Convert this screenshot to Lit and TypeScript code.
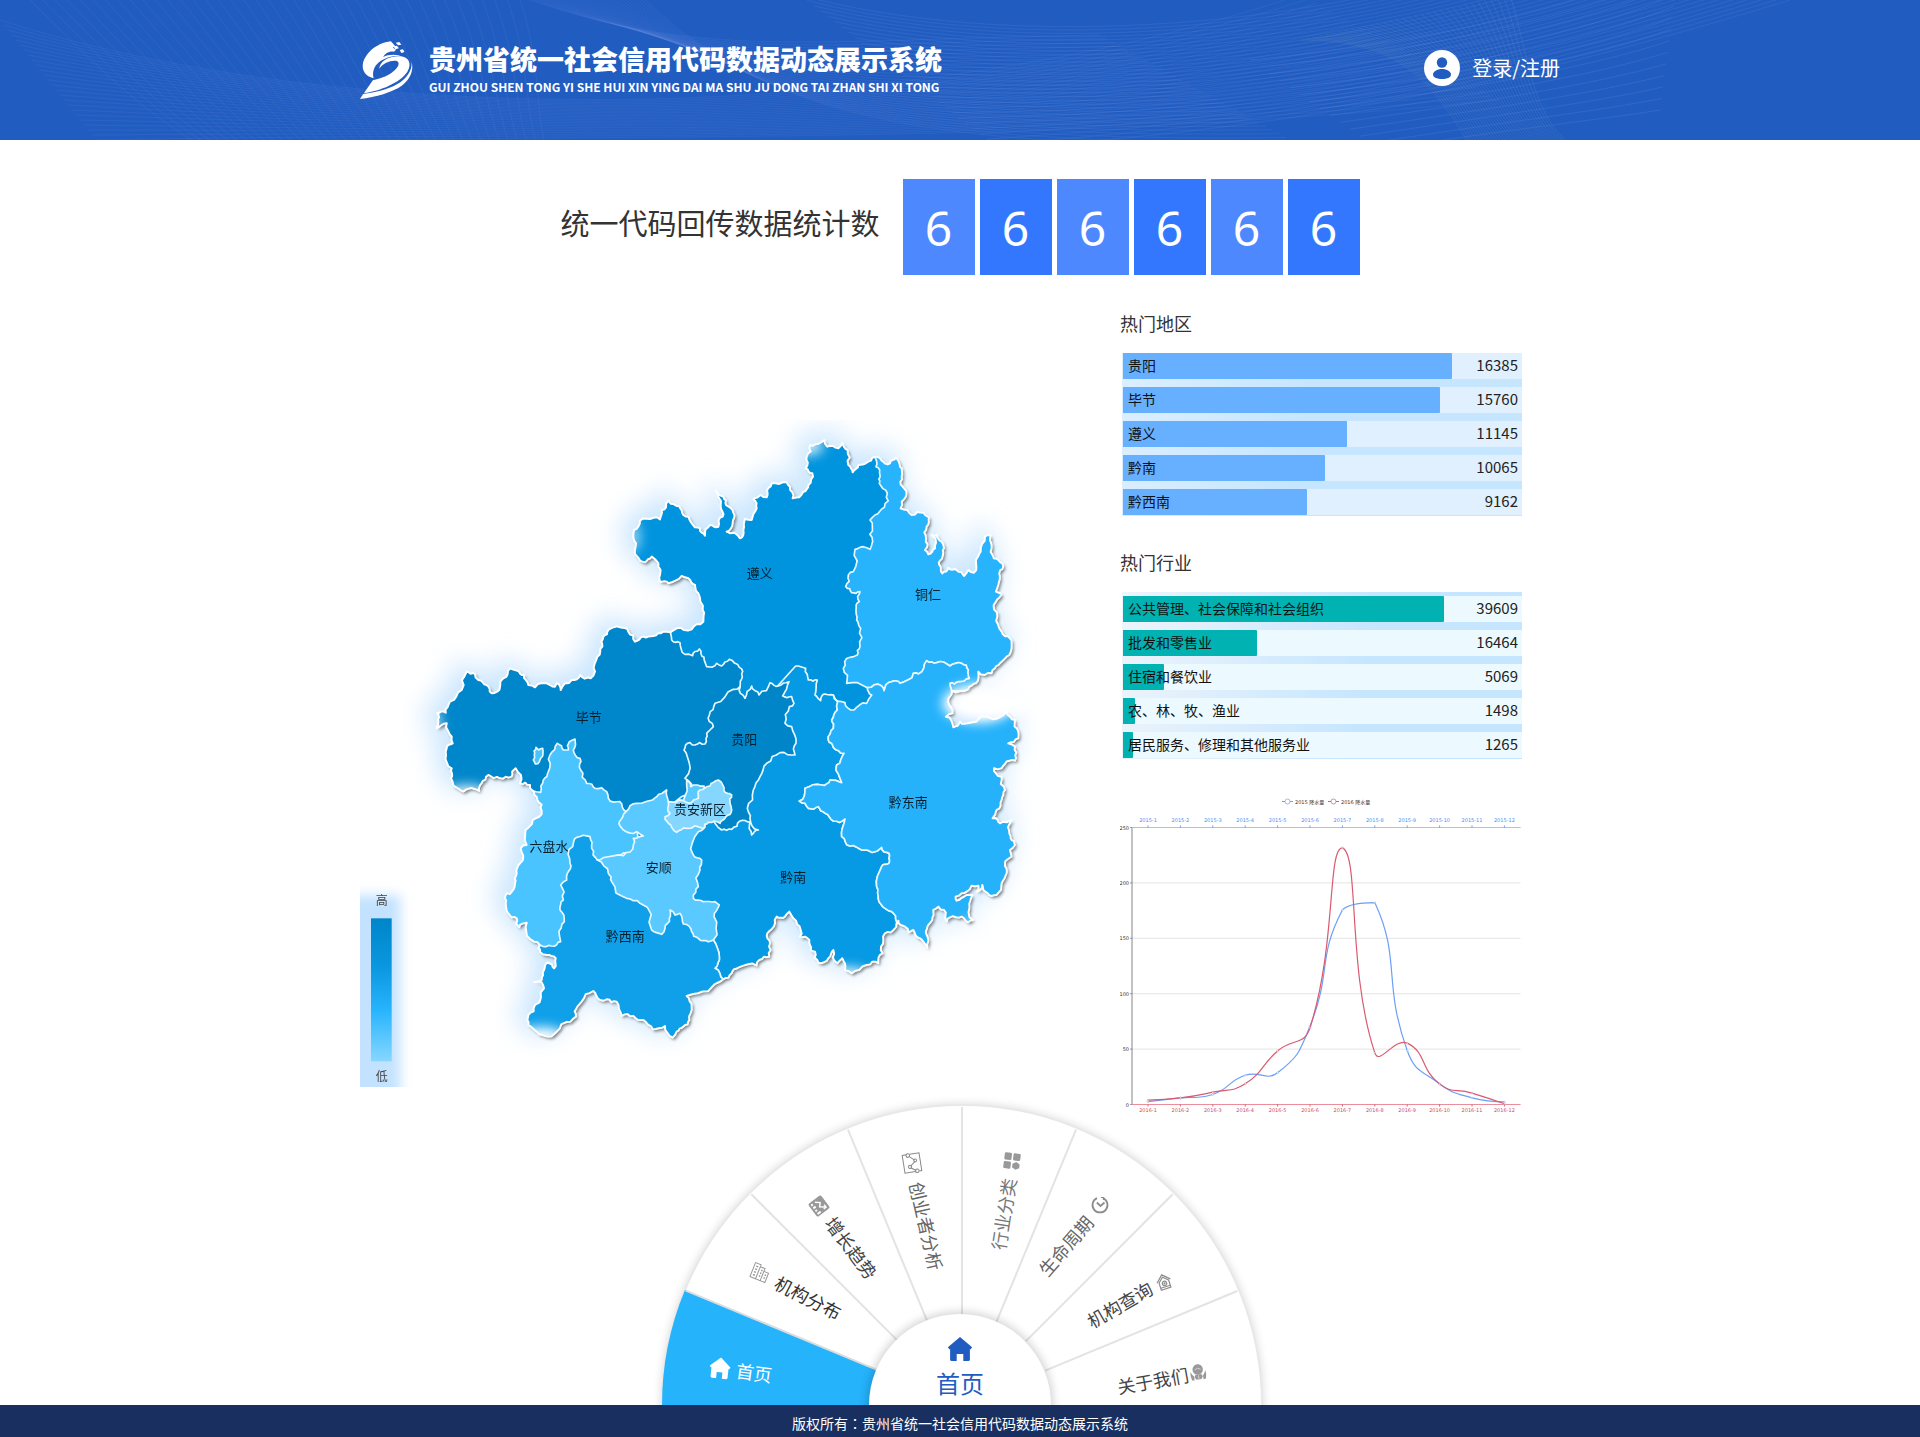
import { LitElement, html, svg, css } from "lit";
import { customElement, property } from "lit/decorators.js";

type Pt = [number, number];

/* ---------- geometry helpers ---------- */

const pts = (s: string): Pt[] =>
  s.trim().split(/\s+/).map((p) => p.split(",").map(Number) as Pt);

/* Roughens a segment the same way whichever direction it is walked in. */
function rough(a: Pt, b: Pt, depth: number): Pt[] {
  const dx = b[0] - a[0];
  const dy = b[1] - a[1];
  const len = Math.hypot(dx, dy);
  if (depth === 0 || len < 12 || len > 130) return [b];
  const h = Math.sin((a[0] + b[0]) * 12.9898 + (a[1] + b[1]) * 78.233) * 43758.5453;
  const flip = a[0] * 3000 + a[1] < b[0] * 3000 + b[1] ? 1 : -1;
  const k = (h - Math.floor(h) - 0.5) * 0.42 * flip;
  const m: Pt = [(a[0] + b[0]) / 2 - dy * k, (a[1] + b[1]) / 2 + dx * k];
  return [...rough(a, m, depth - 1), ...rough(m, b, depth - 1)];
}

function coast(s: string): string {
  const p = pts(s);
  const out: Pt[] = [p[0]];
  p.forEach((a, i) => out.push(...rough(a, p[(i + 1) % p.length], 2)));
  return "M" + out.map((q) => `${q[0].toFixed(1)} ${q[1].toFixed(1)}`).join("L") + "Z";
}

/* ---------- province map ---------- */

const OUTLINE = coast(`850,352 852,330 865,320 870,302 890,296 930,298 935,270 948,262 955,242 975,255 995,270 1000,285 1015,290 1025,310 1050,325
1065,347 1080,315 1105,320 1118,290 1112,260 1105,230 1098,212 1120,230 1128,255 1150,278 1148,310 1130,335 1170,355 1180,330 1185,297 1205,300 1220,265
1210,238 1232,225 1250,232 1255,205 1265,190 1310,187 1320,200 1328,235 1360,215 1375,195 1387,160 1367,145 1370,110 1380,75 1405,72 1423,60 1432,80
1465,85 1477,68 1493,90 1495,135 1508,157 1525,135 1550,128 1572,110 1595,122 1620,130 1637,113 1650,140 1655,170 1658,200 1668,230 1652,265 1685,285
1720,278 1737,292 1730,320 1728,355 1725,390 1735,403 1755,385 1758,368 1745,345 1762,345 1775,365 1782,385 1778,410 1768,435 1777,460 1795,443 1820,450
1842,468 1855,450 1872,458 1878,420 1892,395 1905,350 1922,347 1925,375 1932,415 1957,430 1948,460 1945,495 1938,515 1955,522 1938,545 1942,590 1955,635
1980,655 1985,685 1978,705 1955,725 1935,745 1925,760 1885,755 1878,790 1855,808 1805,812 1795,845 1808,880 1788,890 1810,922 1830,905 1860,908 1930,898
1970,876 1980,890 1995,900 2005,935 2005,955 1975,970 1995,980 1998,1015 1995,1022 1965,1032 1955,1045 1932,1045 1938,1060 1955,1070 1965,1110 1955,1140
1940,1170 1928,1195 1950,1210 1970,1207 1985,1200 1977,1230 1982,1255 1995,1275 1980,1290 1985,1310 1965,1332 1970,1360 1955,1390 1940,1425 1925,1428
1900,1410 1897,1395 1880,1415 1885,1397 1865,1397 1850,1415 1835,1420 1817,1430 1820,1442 1850,1425 1867,1425 1858,1450 1870,1500 1855,1507 1835,1490
1800,1492 1790,1505 1782,1470 1765,1460 1750,1470 1747,1500 1735,1515 1728,1540 1732,1585 1720,1565 1710,1555 1690,1530 1675,1537 1665,1520 1645,1502
1635,1525 1605,1540 1600,1560 1598,1600 1585,1630 1550,1635 1505,1660 1485,1650 1477,1615 1462,1630 1450,1590 1435,1615 1405,1628 1395,1595 1382,1590
1378,1560 1365,1550 1350,1550 1352,1530 1330,1495 1318,1475 1305,1490 1280,1490 1275,1510 1252,1540 1260,1570 1258,1610 1228,1620 1220,1637 1165,1643
1145,1660 1120,1678 1085,1702 1030,1722 1010,1728 1025,1760 1018,1800 1000,1820 980,1835 968,1853 945,1818 908,1828 880,1800 850,1788 815,1788 800,1745
770,1738 750,1740 730,1713 695,1745 682,1760 678,1790 640,1810 625,1830 595,1850 560,1835 535,1815 535,1785 555,1755 582,1705 575,1687 553,1686 575,1680
582,1650 593,1628 612,1645 617,1615 590,1605 570,1595 567,1572 540,1557 530,1508 508,1522 500,1495 475,1480 467,1450 470,1420 480,1422 495,1390 500,1360
510,1330 512,1285 530,1275 538,1220 548,1200 575,1172 562,1140 545,1110 540,1095 510,1090 497,1045 485,1070 450,1075 415,1065 395,1090 388,1113 340,1115
315,1100 303,1075 305,1045 288,1005 290,985 308,970 305,950 290,910 260,925 265,905 262,880 287,878 300,845 335,810 350,755 375,762 385,780 410,795
425,820 450,800 460,775 480,745 500,752 522,765 535,795 555,802 600,795 615,800 620,790 632,810 665,780 690,765 722,775 735,755 742,710 757,680 760,650
775,630 810,622 835,635 855,665 880,650 910,648 940,635 960,637 980,625 1025,628 1060,605 1058,570 1045,520 1035,495 1015,475 995,468 955,490 930,485
925,440 905,410 885,427 862,410 858,370`);

const ZUNYI_TONGREN = `1572,110 1578,140 1590,165 1588,190 1612,220 1603,262 1575,285 1560,300 1567,320 1568,365 1560,388 1540,380 1515,388 1510,455 1495,465
1487,500 1505,518 1530,515 1528,545 1518,570 1520,600 1532,625 1530,680 1522,705 1500,712 1480,745 1490,790`;
const TONGREN_QDN = `1552,803 1595,798 1602,812 1625,785 1650,790 1690,760 1705,762 1730,722 1760,728 1800,738 1835,730 1855,750 1858,775 1825,785 1800,790 1805,812`;
const QIANNAN_QDN = `1450,825 1462,870 1445,900 1450,925 1435,960 1450,982 1482,1000 1460,1035 1475,1088 1440,1080 1415,1095 1365,1105 1348,1143 1375,1165
1405,1160 1425,1180 1450,1203 1485,1197 1475,1250 1500,1278 1535,1290 1595,1282 1617,1300 1617,1330 1595,1340 1580,1400 1585,1438 1605,1465 1625,1475 1640,1505`;
const back = (s: string) => s.trim().split(/\s+/).reverse().join(" ");

const REGIONS: { fill: string; d: string }[] = [
  { fill: "#0087cb", d: coast(`962,560 962,640 965,660 990,668 1005,703 1028,707 1048,687 1062,712 1070,740 1100,730 1115,738 1138,718 1168,742 1177,770 1170,800
    1120,1000 1050,1120 940,1150 828,1200 700,1150 620,1150 500,1130 400,1200 200,1200 200,560`) },
  { fill: "#069ae4", d: coast(`1337,738 1367,745 1375,780 1402,780 1395,825 1412,842 1425,822 ${QIANNAN_QDN} 1640,1800 1120,1800 1120,1678 1095,1645 1108,1610
    1090,1560 1000,1400 1000,1200 1100,1000`) },
  { fill: "#27b4fd", d: coast(`${ZUNYI_TONGREN} ${TONGREN_QDN} 1850,830 2100,800 2100,50 1572,50`) },
  { fill: "#25b2fb", d: coast(`${TONGREN_QDN} 2100,815 2100,1800 1640,1660 ${back(QIANNAN_QDN)} 1485,848 1512,870 1550,850 1565,825`) },
  { fill: "#10a0e9", d: coast(`690,1150 780,1270 900,1300 1000,1400 1090,1560 1108,1610 1095,1645 1120,1678 1100,1900 450,1900 400,1500 600,1540 610,1260`) },
  { fill: "#49c4ff", d: coast(`572,1117 580,1080 595,1055 600,1005 622,970 640,990 655,990 658,965 675,957 670,990 690,1015 692,1050 710,1090 735,1105 770,1115
    775,1135 810,1145 828,1175 860,1220 850,1300 742,1320 725,1285 720,1250 680,1252 668,1280 660,1330 652,1360 650,1380 632,1395 640,1440 630,1470 643,1505
    628,1545 632,1565 605,1578 570,1575 400,1575 400,1120 545,1110`) },
  { fill: "#49c4ff", d: coast(`558,982 566,990 578,985 578,1008 568,1025 556,1032 550,1020 553,1005`) },
  { fill: "#0085c8", d: coast(`1170,800 1185,835 1205,798 1227,825 1260,788 1285,798 1317,785 1298,828 1325,830 1332,850 1318,860 1305,910 1325,920 1338,970
    1335,1005 1290,998 1250,1030 1230,1070 1210,1110 1192,1165 1200,1195 1225,1230 1205,1245 1200,1205 1170,1203 1145,1228 1115,1230 1080,1190 1030,1120
    1005,1075 1012,1010 1002,990 1020,968 1035,975 1065,972 1070,940 1090,920 1078,885 1095,850 1150,808`) },
  { fill: "#5ac9ff", d: coast(`828,1175 860,1150 920,1130 950,1110 955,1145 1000,1142 1010,1080 1022,1100 1062,1098 1070,1200 1045,1235 1030,1305 1055,1320
    1050,1350 1045,1400 1030,1435 1060,1445 1095,1445 1108,1455 1092,1490 1090,1560 1060,1562 1045,1555 1025,1535 1000,1512 990,1480 975,1485 960,1470
    958,1495 945,1525 935,1543 905,1530 870,1450 830,1435 785,1385 775,1360 742,1320 760,1313 820,1307 850,1275 850,1255 880,1248 860,1235 818,1228 808,1205`) },
  { fill: "#86d7ff", d: coast(`955,1145 1000,1142 1020,1150 1045,1135 1050,1110 1080,1098 1105,1080 1118,1095 1122,1112 1145,1125 1140,1150 1145,1170 1128,1190
    1110,1210 1075,1207 1060,1225 1010,1225 980,1237 962,1215 945,1190 960,1180`) },
];

const PLACES: [string, number, number][] = [
  ["遵义", 1229, 457], ["铜仁", 1734, 521], ["毕节", 716, 890], ["贵阳", 1183, 956],
  ["贵安新区", 1050, 1167], ["黔东南", 1675, 1146], ["六盘水", 597, 1276],
  ["安顺", 926, 1341], ["黔南", 1330, 1371], ["黔西南", 826, 1546],
];

@customElement("province-map")
class ProvinceMap extends LitElement {
  static styles = css`
    :host { display: block; }
    svg { display: block; width: 100%; height: auto; }
    .place { font-size: 39px; fill: #06202e; }
    .scale { font-size: 36px; fill: #444; }
    text { text-anchor: middle; dominant-baseline: central; }
  `;
  render() {
    return html`<svg viewBox="30 0 2040 2000" role="img" aria-label="贵州省地图">
      <defs>
        <clipPath id="land"><path d=${OUTLINE} /></clipPath>
        <clipPath id="corner"><rect x="30" y="1340" width="200" height="660" /></clipPath>
        <filter id="glow" x="-20%" y="-20%" width="140%" height="140%"><feGaussianBlur stdDeviation="40" /></filter>
        <filter id="shade" x="-10%" y="-10%" width="120%" height="120%"><feGaussianBlur stdDeviation="5" /></filter>
        <filter id="fade" x="-80%" y="-80%" width="260%" height="260%"><feGaussianBlur stdDeviation="18" /></filter>
        <linearGradient id="ramp" x1="0" y1="0" x2="0" y2="1">
          <stop offset="0" stop-color="#0085c8" /><stop offset="0.35" stop-color="#0a98e0" />
          <stop offset="0.65" stop-color="#29b5fd" /><stop offset="1" stop-color="#86d7ff" />
        </linearGradient>
      </defs>
      <path d=${OUTLINE} fill="#b5dcfd" stroke="#b5dcfd" stroke-width="30" opacity="0.7" filter="url(#glow)" transform="translate(-20 -16)" />
      <ellipse cx="1925" cy="850" rx="120" ry="42" fill="#fff" filter="url(#fade)" />
      <path d=${OUTLINE} fill="#333" opacity="0.6" filter="url(#shade)" transform="translate(6 7)" />
      <path d=${OUTLINE} fill="#0094de" />
      <g clip-path="url(#land)">
        ${REGIONS.map((r) => svg`<path d=${r.d} fill=${r.fill} stroke="#eaf8ff" stroke-width="5" stroke-linejoin="round" />`)}
        <g fill="#fff" filter="url(#fade)">
          <ellipse cx="1375" cy="80" rx="45" ry="26" opacity="0.8" />
          <ellipse cx="850" cy="350" rx="20" ry="46" opacity="0.6" />
          <ellipse cx="575" cy="1850" rx="70" ry="28" />
          <ellipse cx="1500" cy="1662" rx="50" ry="18" />
          <ellipse cx="350" cy="1120" rx="60" ry="24" opacity="0.9" />
          <ellipse cx="1885" cy="850" rx="108" ry="58" />
          <ellipse cx="255" cy="915" rx="16" ry="50" opacity="0.8" />
          <ellipse cx="1866" cy="1512" rx="22" ry="14" opacity="0.8" />
        </g>
      </g>
      <path d=${OUTLINE} fill="none" stroke="#fff" stroke-width="6" stroke-linejoin="round" />
      <ellipse cx="1895" cy="852" rx="85" ry="30" fill="#fff" filter="url(#fade)" />
      ${PLACES.map(([n, x, y]) => svg`<text class="place" x=${x} y=${y}>${n}</text>`)}
      <g clip-path="url(#corner)">
        <rect x="-60" y="1425" width="210" height="700" fill="#c2e2ff" filter="url(#fade)" />
      </g>
      <rect x="63" y="1495" width="62" height="429" fill="url(#ramp)" />
      <text class="scale" x="95" y="1440">高</text>
      <text class="scale" x="95" y="1966">低</text>
    </svg>`;
  }
}

/* ---------- ranked bars ---------- */

interface Rank { name: string; value: number }

@customElement("rank-list")
class RankList extends LitElement {
  static styles = css`
    :host { display: block; --bar: #66b0ff; --row: #e0f0ff; }
    :host([tone="teal"]) { --bar: #00b2b2; --row: #ecf9ff; }
    h2 { margin: 0 0 20px; font-size: 18px; line-height: 20px; font-weight: 400; color: #333; }
    ul { margin: 0 0 0 2px; padding: 0 0 1px 1px; list-style: none; display: grid; gap: 8px;
      background: linear-gradient(100deg, #dcefff 0%, #c6e6ff 45%); }
    :host([tone="teal"]) ul { padding-top: 4px; background: linear-gradient(100deg, #eef4fa 0%, #c6e6ff 60%); }
    li { display: grid; grid-template-columns: 1fr auto; align-items: start; height: 26px;
      background: var(--row); font-size: 14px; line-height: 24px; color: #111; padding-right: 4px; position: relative; }
    .bar { position: absolute; inset: 0 auto 0 0; background: var(--bar); border-radius: 0 1px 1px 0; }
    .name { position: relative; padding-left: 5px; }
    .value { position: relative; font-size: 15px; color: #222; }
  `;
  @property() heading = "";
  @property({ type: Number }) span = 82;
  @property({ attribute: false }) rows: Rank[] = [];
  render() {
    const max = Math.max(...this.rows.map((r) => r.value));
    return html`<h2>${this.heading}</h2>
      <ul>
        ${this.rows.map((r) => html`<li>
          <div class="bar" style="width:${((r.value / max) * this.span).toFixed(2)}%"></div>
          <span class="name">${r.name}</span><span class="value">${r.value}</span>
        </li>`)}
      </ul>`;
  }
}

/* ---------- rainfall chart ---------- */

const RAIN_2015 = [2.6, 5.9, 9, 26.4, 28.7, 70.7, 175.6, 182.2, 48.7, 18.8, 6, 2.3];
const RAIN_2016 = [3.9, 5.9, 11.1, 18.7, 48.3, 69.2, 231.6, 46.6, 55.4, 18.4, 10.3, 0.7];

@customElement("rain-chart")
class RainChart extends LitElement {
  static styles = css`
    :host { display: block; }
    svg { display: block; width: 100%; height: auto; font-family: "DejaVu Sans", "Noto Sans CJK SC", sans-serif; font-size: 5px; }
    text { dominant-baseline: central; fill: #333; }
    .mid { text-anchor: middle; }
    .end { text-anchor: end; }
    .blue { fill: #4d8df5; }
    .red { fill: #d14a61; }
  `;
  private at(data: number[]): Pt[] {
    return data.map((v, i) => [28 + 32.4 * i, 314.5 - v * 1.108]);
  }
  private curve(data: number[]) {
    const p = this.at(data);
    const ys = p.map((q) => q[1]);
    const lo = Math.min(...ys);
    const hi = Math.max(...ys);
    const clamp = (q: Pt): Pt => [q[0], Math.min(hi, Math.max(lo, q[1]))];
    let c0 = p[0];
    let d = `M${p[0]}`;
    for (let i = 1; i < p.length; i++) {
      let c1 = p[i];
      let next = p[i];
      if (i < p.length - 1) {
        const [a, b, c] = [p[i - 1], p[i], p[i + 1]];
        const before = Math.hypot(b[0] - a[0], b[1] - a[1]);
        const after = Math.hypot(c[0] - b[0], c[1] - b[1]);
        const k = after / (after + before);
        const v: Pt = [(c[0] - a[0]) * 0.5, (c[1] - a[1]) * 0.5];
        c1 = clamp([b[0] - v[0] * (1 - k), b[1] - v[1] * (1 - k)]);
        next = clamp([b[0] + v[0] * k, b[1] + v[1] * k]);
      }
      d += `C${c0} ${c1} ${p[i]}`;
      c0 = next;
    }
    return d;
  }
  private legend(x: number, name: string, color: string) {
    return svg`<path d="M${x} 11.5h11" stroke=${color} /><circle cx=${x + 5.5} cy="11.5" r="2.5" fill="#fff" stroke=${color} stroke-width="0.7" />
      <text x=${x + 13} y="11.5">${name}</text>`;
  }
  render() {
    const months = RAIN_2015.map((_, i) => i + 1);
    const blue = "#6a9ff8";
    const red = "#da5a70";
    return html`<svg viewBox="0 0 402 325" role="img" aria-label="降水量">
      ${this.legend(162, "2015 降水量", blue)}${this.legend(208, "2016 降水量", red)}
      ${[0, 50, 100, 150, 200, 250].map((v) => {
        const y = 314.5 - v * 1.108;
        return svg`<path d="M12 ${y}H400.5" stroke="#e4e4e4" />
          <path d="M10 ${y}h2" stroke="#777" stroke-width="0.7" /><text class="end" x="9" y=${y}>${v}</text>`;
      })}
      <path d="M12 37.5V314.5" stroke="#666" stroke-width="0.8" />
      <path d="M12 37.5H400.5" stroke="#a0c4ff" />
      <path d="M12 314.5H400.5" stroke="#eb8d9b" />
      ${months.map((m, i) => svg`<path d="M${28 + 32.4 * i} 35.5v2" stroke=${blue} /><path d="M${28 + 32.4 * i} 314.5v2" stroke=${red} />
        <text class="mid blue" x=${28 + 32.4 * i} y="30">2015-${m}</text>
        <text class="mid red" x=${28 + 32.4 * i} y="320">2016-${m}</text>`)}
      ${([[RAIN_2015, blue], [RAIN_2016, red]] as [number[], string][]).map(([data, color]) => svg`
        <path d=${this.curve(data)} fill="none" stroke=${color} stroke-width="1.2" />
        ${this.at(data).map((q) => svg`<circle cx=${q[0]} cy=${q[1]} r="0.9" fill="#fff" stroke=${color} stroke-width="0.4" />`)}`)}
    </svg>`;
  }
}

/* ---------- wheel menu ---------- */

const HOME = "M0 -11L11 -1.5L9.5 0.5L9 0V9.5Q9 11 7.5 11H3V4.5H-3V11H-7.5Q-9 11 -9 9.5V0L-9.5 0.5L-11 -1.5Z";

const ICONS = {
  home: svg`<path d=${HOME} fill="#fff" transform="scale(0.95)" />`,
  buildings: svg`<g fill="none" stroke="#999" stroke-width="1"><path d="M-8 7V-8H-2V7ZM-2 7V-6H3V7M3 7V-3H8V7H-8" />
    <path d="M-6 -5H-4M-6 -2H-4M-6 1H-4M-6 4H-4M0 -3H1.500M0 0H1.500M0 3H1.500M5 0H6.500M5 3H6.500" stroke-width="1.500" /></g>`,
  growth: svg`<rect x="-8" y="-8" width="16" height="16" rx="2" fill="#999" />
    <g fill="none" stroke="#fff" stroke-width="1.4"><path d="M-5.500 1L-2 -3L1 0L5 -5M2 -5H5.200V-2" /><path d="M-5 6V4M-1.500 6V3M2 6V4M5.500 6V2" stroke-width="2" /></g>`,
  network: svg`<g fill="none" stroke="#888" stroke-width="1"><path d="M-4 -9H-8.500V9H2M-1 -9H8.500V9H6M-2 -7L3 -2.500M3 -1L-2 3M-2 4.500L3 8" />
    <circle cx="-3" cy="-8" r="1.800" /><circle cx="3.500" cy="-2" r="1.400" /><circle cx="-2.500" cy="3.500" r="1.600" /><circle cx="4" cy="8.500" r="1.800" /></g>`,
  blocks: svg`<g fill="#999"><rect x="-8" y="-8" width="7.200" height="7.200" rx="1.200" /><rect x="0.800" y="-8" width="7.200" height="7.200" rx="1.200" />
    <rect x="-8" y="0.800" width="7.200" height="7.200" rx="1.200" /><path d="M4.400 0.500L8 2.600V6.200L4.400 8.300L0.800 6.200V2.600Z" /></g>`,
  clock: svg`<g fill="none" stroke="#8c8c8c" stroke-width="1.800"><path d="M-3 -6.900A7.500 7.500 0 1 0 3 -6.900" /><path d="M-3.200 -2.500L0.500 1L4.500 -2.500" /><path d="M1 -7.500H3.500V-5" stroke-width="1.200" /></g>`,
  search: svg`<g fill="none" stroke="#8c8c8c" stroke-width="1.200"><path d="M-7 -1L0 -7.500L7 -1" /><path d="M-5 7V-0.500L0 -5L5 -0.500V7Z" />
    <circle cx="0" cy="1.500" r="2.200" /><circle cx="0" cy="1.500" r="0.500" /><path d="M-5 5H5" /></g>`,
  people: svg`<g fill="#999"><circle cx="0" cy="-2.500" r="5.200" /><path d="M-3 2.500H3L4.200 5L2.500 7.500H-2.500L-4.200 5Z" />
    <path d="M-7.500 -1Q-6 3 -4.500 4L-4.500 8L-7 7.500Q-8.500 3 -7.500 -1ZM7.500 -1Q6 3 4.500 4L4.500 8L7 7.500Q8.500 3 7.500 -1Z" /></g>
    <path d="M-3 -2.500Q0 -5 3 -2.500M0 3.500V7" stroke="#ddd" stroke-width="0.800" fill="none" />`,
};

interface Slice { label: string; x: number; y: number; turn: number; icon: keyof typeof ICONS; ix: number; iy: number; iturn: number; ink: string }

const SLICES: Slice[] = [
  { label: "首页", x: 104, y: 283, turn: 8, icon: "home", ix: 70, iy: 278, iturn: 6, ink: "#fff" },
  { label: "机构分布", x: 158, y: 208, turn: 27, icon: "buildings", ix: 110, iy: 183, iturn: 22, ink: "#333" },
  { label: "增长趋势", x: 201, y: 158, turn: 53, icon: "growth", ix: 169, iy: 116, iturn: 53, ink: "#444" },
  { label: "创业者分析", x: 276, y: 136, turn: 77, icon: "network", ix: 262, iy: 73, iturn: -9, ink: "#666" },
  { label: "行业分类", x: 354, y: 124, turn: -81, icon: "blocks", ix: 362, iy: 71, iturn: 7, ink: "#777" },
  { label: "生命周期", x: 416, y: 156, turn: -49, icon: "clock", ix: 450, iy: 115, iturn: 0, ink: "#666" },
  { label: "机构查询", x: 470, y: 215, turn: -30, icon: "search", ix: 514, iy: 192, iturn: -18, ink: "#444" },
  { label: "关于我们", x: 503, y: 291, turn: -10, icon: "people", ix: 548, iy: 282, iturn: -8, ink: "#444" },
];

const spoke = (deg: number, r: number): Pt => [
  312 - Math.cos((deg * Math.PI) / 180) * r,
  315 - Math.sin((deg * Math.PI) / 180) * r,
];

@customElement("wheel-menu")
class WheelMenu extends LitElement {
  static styles = css`
    :host { display: block; }
    svg { display: block; width: 100%; height: auto; }
    text { font-size: 18px; text-anchor: middle; dominant-baseline: central; }
    .hub { font-size: 24px; fill: #215dc1; }
    a { text-decoration: none; }
  `;
  render() {
    return html`<nav aria-label="主导航"><svg viewBox="0 0 630 315">
      <defs>
        <filter id="soft" x="-10%" y="-10%" width="120%" height="120%"><feGaussianBlur stdDeviation="5" /></filter>
        <clipPath id="disc"><circle cx="312" cy="315" r="300" /></clipPath>
      </defs>
      <circle cx="312" cy="315" r="301" fill="#000" opacity="0.15" filter="url(#soft)" />
      <circle cx="312" cy="315" r="300" fill="#fff" stroke="#e8e8e8" stroke-width="2" />
      ${[45, 67.5, 90, 112.5, 135, 157.5].map((a) => svg`<path d="M${spoke(a, 90)}L${spoke(a, 298)}" stroke="#e3e3e3" stroke-width="2" />`)}
      <path d="M312 315L${spoke(0, 300)}A300 300 0 0 1 ${spoke(22.5, 300)}Z" fill="#25b3fb" />
      <path d="M${spoke(22.5, 90)}L${spoke(22.5, 299)}" stroke="#d9dde0" stroke-width="2" />
      <g clip-path="url(#disc)"><circle cx="310" cy="315" r="93" fill="#000" opacity="0.18" filter="url(#soft)" /></g>
      <circle cx="310" cy="315" r="91" fill="#fff" />
      ${SLICES.map((s) => svg`<a href="#${s.icon}">
        <g transform="translate(${s.ix} ${s.iy}) rotate(${s.iturn})">${ICONS[s.icon]}</g>
        <text y="-1" fill=${s.ink} transform="translate(${s.x} ${s.y}) rotate(${s.turn})">${s.label}</text>
      </a>`)}
      <path d=${HOME} fill="#215dc1" transform="translate(310 259) scale(1.1)" />
      <text class="hub" x="310" y="292">首页</text>
    </svg></nav>`;
  }
}

/* ---------- page ---------- */

/* A band of hairlines blended between two cubic curves. */
function band(a: number[], b: number[], n: number) {
  return Array.from({ length: n }, (_, i) => {
    const c = a.map((v, k) => (v + ((b[k] - v) * i) / (n - 1)).toFixed(1));
    return `M${c[0]} ${c[1]}C${c.slice(2).join(" ")}`;
  }).join("");
}

const REGION_ROWS: Rank[] = [
  { name: "贵阳", value: 16385 }, { name: "毕节", value: 15760 }, { name: "遵义", value: 11145 },
  { name: "黔南", value: 10065 }, { name: "黔西南", value: 9162 },
];
const TRADE_ROWS: Rank[] = [
  { name: "公共管理、社会保障和社会组织", value: 39609 }, { name: "批发和零售业", value: 16464 },
  { name: "住宿和餐饮业", value: 5069 }, { name: "农、林、牧、渔业", value: 1498 },
  { name: "居民服务、修理和其他服务业", value: 1265 },
];

@customElement("app-root")
class AppRoot extends LitElement {
  static styles = css`
    :host { display: block; background: #fff; color: #333; font-family: "Noto Sans CJK SC", "Noto Sans", sans-serif; }
    .header { position: relative; background: #215dc1; color: #fff; overflow: hidden; }
    .waves { position: absolute; inset: 0; width: 100%; height: 100%; }
    .bar { position: relative; max-width: 1200px; height: 140px; margin: 0 auto;
      display: flex; align-items: center; justify-content: space-between; }
    .brand { display: flex; align-items: center; gap: 16px; }
    .logo { width: 53px; height: 58px; }
    h1 { margin: 0; font-size: 27px; line-height: 34px; font-weight: 900; }
    .pinyin { margin: 0; font-size: 12px; line-height: 22px; font-weight: 700; white-space: nowrap; }
    .login { display: flex; align-items: center; gap: 12px; padding-bottom: 4px; color: #fff; font-size: 20px; line-height: 28px; text-decoration: none; }
    .login svg { width: 36px; height: 36px; }
    .stats { display: flex; align-items: center; justify-content: center; gap: 23px; padding-top: 39px; }
    .stats h2 { margin: 0; padding-bottom: 10px; font-size: 29px; line-height: 40px; font-weight: 400; color: #333; }
    .digits { display: flex; gap: 5px; }
    .digit { width: 72px; height: 96px; background: #4d88ff; color: #fff; text-align: center;
      font: 48px/98px "Noto Sans", "Open Sans", sans-serif; }
    .digit:nth-child(even) { background: #3377ff; }
    .body { display: flex; justify-content: space-between; align-items: flex-start; max-width: 1200px; margin: 0 auto;
      padding: 38px 38px 0 0; box-sizing: border-box; }
    province-map { flex: 0 1 680px; margin-top: 107px; }
    .side { flex: 0 1 402px; display: grid; gap: 31px; }
    rank-list + rank-list { margin-top: 5px; }
    wheel-menu { max-width: 630px; margin: -25px auto 0; position: relative; left: 5px; }
    .footer { background: #182f60; color: #fff; font-size: 14px; line-height: 28px; text-align: center; padding-top: 4px; }
    .colon { font-family: "Noto Sans CJK TC", sans-serif; }
  `;
  render() {
    return html`
      <header class="header">
        <svg class="waves" viewBox="0 0 1920 140" preserveAspectRatio="xMidYMid slice" fill="none" stroke="#6f8fdd" aria-hidden="true">
          <path stroke-opacity="0.14" d=${band([30, 0, 90, 60, 140, 110, 200, 145], [520, 0, 540, 60, 535, 100, 545, 145], 40)} />
          <path stroke-opacity="0.16" d=${band([525, -2, 700, 60, 800, 40, 1100, 35], [640, -5, 760, 110, 900, 150, 1300, 145], 30)} />
          <path stroke-opacity="0.14" d=${band([0, 20, 340, 130, 900, 130, 1300, -5], [100, 145, 600, 130, 1000, 150, 1500, 100], 26)} />
          <path stroke="#86a7b8" stroke-opacity="0.16" d=${band([1300, 40, 1400, 40, 1430, 80, 1470, 145], [1510, -5, 1530, 60, 1530, 110, 1570, 145], 34)} />
          <path stroke-opacity="0.22" d=${band([1250, 60, 1450, 40, 1600, 0, 1680, -40], [1380, 150, 1500, 130, 1600, 120, 1660, 110], 14)} />
          <path stroke-opacity="0.18" d=${band([800, -5, 1000, 50, 1300, 30, 1500, -40], [1000, 150, 1200, 130, 1400, 120, 1790, 0], 30)} />
        </svg>
        <div class="bar">
          <div class="brand">
            <svg class="logo" viewBox="50 120 132 174" preserveAspectRatio="none" fill="#fff" aria-hidden="true">
              <path d="M127 121C90 126 62 158 57 190C55 210 64 226 84 232C80 215 84 196 98 183C112 170 138 160 156 168C142 158 120 160 108 168C112 158 122 150 134 152L140 146L132 140L137 134Z" />
              <path d="M98 203C108 184 130 176 142 180C152 186 144 206 120 222C108 229 96 234 82 238L60 276C100 270 150 245 168 212C180 188 172 168 150 166C122 164 100 180 98 203Z" />
              <path d="M178 179C182 200 170 232 142 250C118 266 90 274 58 279L50 294C90 288 130 274 154 254C178 232 184 204 178 179Z" />
              <path d="M139 125L148 123L153 131L145 133ZM133 136L142 134L147 142L138 145ZM149 147L157 145L161 153L153 156Z" />
            </svg>
            <div>
              <h1>贵州省统一社会信用代码数据动态展示系统</h1>
              <p class="pinyin">GUI ZHOU SHEN TONG YI SHE HUI XIN YING DAI MA SHU JU DONG TAI ZHAN SHI XI TONG</p>
            </div>
          </div>
          <a class="login" href="#login">
            <svg viewBox="0 0 36 36" aria-hidden="true">
              <circle cx="18" cy="18" r="18" fill="#fff" /><circle cx="18" cy="12.500" r="5.200" fill="#215dc1" />
              <path d="M18 19C23 19 27 21.500 27 24.500C27 27.500 23 29 18 29C13 29 9 27.500 9 24.500C9 21.500 13 19 18 19Z" fill="#215dc1" />
            </svg>
            <span>登录/注册</span>
          </a>
        </div>
      </header>
      <main>
        <section class="stats">
          <h2>统一代码回传数据统计数</h2>
          <div class="digits">${[..."666666"].map((d) => html`<span class="digit">${d}</span>`)}</div>
        </section>
        <div class="body">
          <province-map></province-map>
          <div class="side">
            <rank-list heading="热门地区" .span=${82.5} .rows=${REGION_ROWS}></rank-list>
            <rank-list heading="热门行业" tone="teal" .span=${80.5} .rows=${TRADE_ROWS}></rank-list>
            <rain-chart></rain-chart>
          </div>
        </div>
        <wheel-menu></wheel-menu>
      </main>
      <footer class="footer">版权所有<span class="colon">：</span>贵州省统一社会信用代码数据动态展示系统</footer>
    `;
  }
}
